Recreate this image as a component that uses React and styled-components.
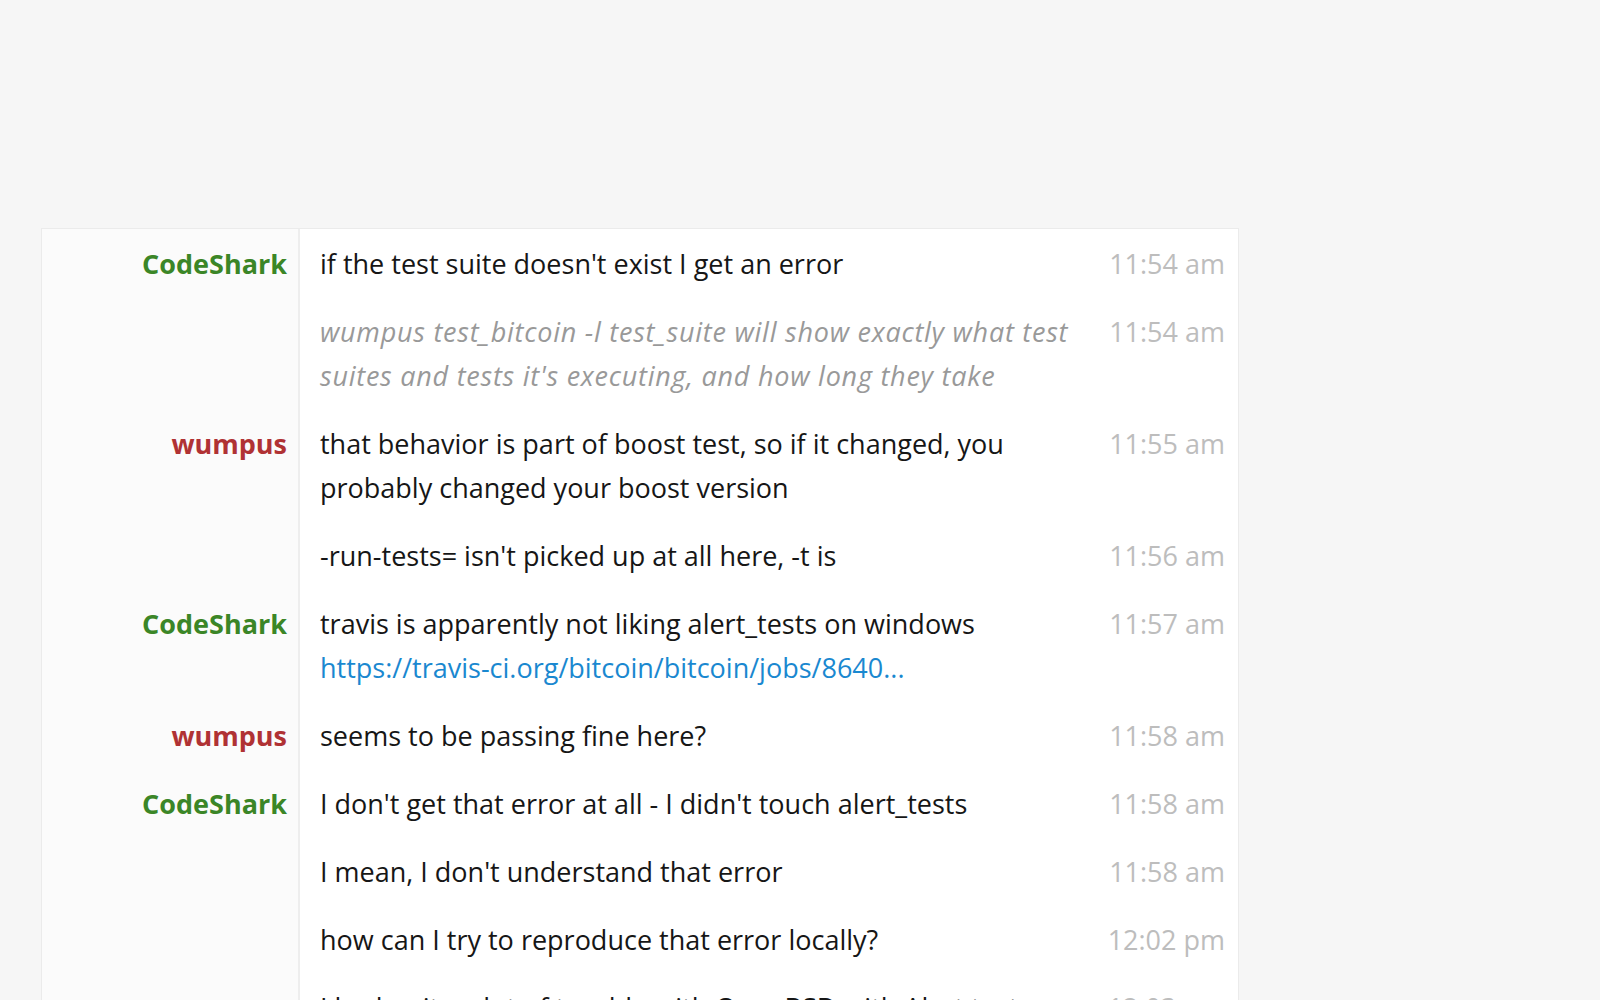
import React from "react";
import styled, { createGlobalStyle } from "styled-components";

const Global = createGlobalStyle`
  html, body { margin: 0; padding: 0; background: #f6f6f6; }
  body { font-family: "Open Sans", "Noto Sans", sans-serif; overflow: hidden; }
`;

const Page = styled.div`
  padding: 228px 0 0 41px;
  height: 1000px;
  box-sizing: border-box;
`;

const Log = styled.div`
  width: 1198px;
  background: #fff;
  border: 1px solid #ebebeb;
  border-bottom: none;
  box-sizing: border-box;
  min-height: 800px;
  display: flex;
  flex-direction: column;
`;

const Row = styled.div`
  display: grid;
  grid-template-columns: 258px 1fr 150px;
  font-size: 27px;
  line-height: 44px;
`;

const Nick = styled.div`
  background: #fbfbfb;
  border-right: 2px solid #eeeeee;
  padding: ${p => (p.$first ? "13px" : "12px")} 11px 12px 0;
  text-align: right;
  font-weight: 700;
  color: ${p => p.$color};
`;

const Message = styled.div`
  padding: ${p => (p.$first ? "13px" : "12px")} 8px 12px 20px;
  color: ${p => (p.$action ? "#999999" : "#161616")};
  font-style: ${p => (p.$action ? "italic" : "normal")};
  letter-spacing: ${p => (p.$action ? "0.75px" : "normal")};
`;

const Link = styled.a`
  color: #1a88d0;
  text-decoration: none;
`;

const Time = styled.div`
  padding: ${p => (p.$first ? "13px" : "12px")} 13px 12px 0;
  text-align: right;
  color: #bdbdbd;
  white-space: nowrap;
`;

const Filler = styled.div`
  flex: 1;
  display: grid;
  grid-template-columns: 258px 1fr;
`;

const FillerNick = styled.div`
  background: #fbfbfb;
  border-right: 2px solid #eeeeee;
`;

const GREEN = "#3b8627";
const RED = "#b03234";

const messages = [
  { nick: "CodeShark", color: GREEN, text: "if the test suite doesn't exist I get an error", time: "11:54 am" },
  { nick: "", action: true, text: "wumpus test_bitcoin -l test_suite will show exactly what test suites and tests it's executing, and how long they take", time: "11:54 am" },
  { nick: "wumpus", color: RED, text: "that behavior is part of boost test, so if it changed, you probably changed your boost version", time: "11:55 am" },
  { nick: "", text: "-run-tests= isn't picked up at all here, -t is", time: "11:56 am" },
  { nick: "CodeShark", color: GREEN, text: "travis is apparently not liking alert_tests on windows", link: "https://travis-ci.org/bitcoin/bitcoin/jobs/8640...", time: "11:57 am" },
  { nick: "wumpus", color: RED, text: "seems to be passing fine here?", time: "11:58 am" },
  { nick: "CodeShark", color: GREEN, text: "I don't get that error at all - I didn't touch alert_tests", time: "11:58 am" },
  { nick: "", text: "I mean, I don't understand that error", time: "11:58 am" },
  { nick: "", text: "how can I try to reproduce that error locally?", time: "12:02 pm" },
  { nick: "", text: "I had quite a lot of trouble with OpenBSD with Alert tests", time: "12:03 pm" },
];

export default function App() {
  return (
    <>
      <Global />
      <Page>
        <Log>
          {messages.map((m, i) => (
            <Row key={i}>
              <Nick $color={m.color} $first={i === 0}>{m.nick}</Nick>
              <Message $action={m.action} $first={i === 0}>
                {m.text}
                {m.link && (
                  <>
                    <br />
                    <Link href="#">{m.link}</Link>
                  </>
                )}
              </Message>
              <Time $first={i === 0}>{m.time}</Time>
            </Row>
          ))}
          <Filler>
            <FillerNick />
            <div />
          </Filler>
        </Log>
      </Page>
    </>
  );
}
